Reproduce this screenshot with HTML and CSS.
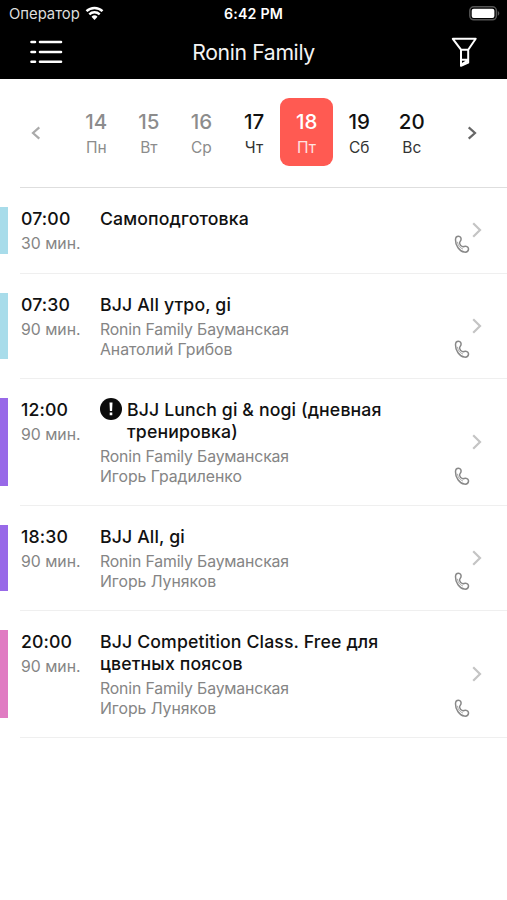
FILE: index.html
```html
<!DOCTYPE html>
<html lang="ru">
<head>
<meta charset="utf-8">
<title>Ronin Family</title>
<link rel="stylesheet" href="styles.css">
</head>
<body>
<svg class="defs" width="0" height="0" aria-hidden="true">
  <symbol id="phone" viewBox="0 0 16 19"><path d="M1.500 4.800C1.500 2.200 2.800 1.200 4.500 1.200 6.500 1.200 7.400 3.200 7 4.800 6.700 6.300 5.300 6.900 5.600 8.300c.3 1.500 1.500 2.900 2.900 3.300 1.200.3 2-.5 3.300-.3 1.600.2 2.900 1.600 2.700 3.100-.3 2-2.100 3-4.200 2.700C5.500 16.500 1.300 10.200 1.500 4.800z"/><path class="fold" d="M3.400 6.800c.3 3.200 2.300 6 5.600 7.300"/></symbol>
  <symbol id="chevron" viewBox="0 0 10 16"><path d="M1.200 1.200 8 8l-6.800 6.800"/></symbol>
</svg>
<header class="top">
  <div class="status">
    <div class="carrier">Оператор
      <svg class="wifi" width="19" height="15" viewBox="0 0 19 15"><path d="M1.500 5.200a11.500 11.500 0 0 1 16 0M4.300 8.300a7.500 7.500 0 0 1 10.400 0"/><path class="dot" d="M6.500 10.700a4.300 4.300 0 0 1 6 0l-3 3.200z"/></svg>
    </div>
    <div class="clock">6:42 PM</div>
    <svg class="battery" width="31" height="15" viewBox="0 0 31 15"><rect class="shell" x=".8" y=".8" width="26.600" height="13" rx="4"/><rect class="charge" x="2.700" y="2.700" width="22.700" height="9.200" rx="2"/><path class="tip" d="M28.800 5c2 .8 2 3.900 0 4.700z"/></svg>
  </div>
  <nav class="nav">
    <svg class="menu" width="34" height="26" viewBox="0 0 34 26"><path d="M2.500 3H6M11 3h21M2.500 13H6M11 13h21M2.500 22.700H6M11 22.700h21"/></svg>
    <h1>Ronin Family</h1>
    <svg class="filter" width="26" height="31" viewBox="0 0 26 31"><path d="M1.800 1.800h22.900L17.200 12.700v13l-7.200 3.100V12.700zM10 12.700h7.200M10 22.800h7.200M10.200 27.500l6.500-4"/></svg>
  </nav>
</header>
<section class="week">
  <svg class="prev" width="10" height="14" viewBox="0 0 10 14"><path d="M8.300 1.400 2 7l6.300 5.600"/></svg>
  <div class="days">
    <div class="day past"><b>14</b><span>Пн</span></div>
    <div class="day past"><b>15</b><span>Вт</span></div>
    <div class="day past"><b>16</b><span>Ср</span></div>
    <div class="day"><b>17</b><span>Чт</span></div>
    <div class="day selected"><b>18</b><span>Пт</span></div>
    <div class="day"><b>19</b><span>Сб</span></div>
    <div class="day"><b>20</b><span>Вс</span></div>
  </div>
  <svg class="next" width="10" height="14" viewBox="0 0 10 14"><path d="M1.700 1.400 8 7l-6.300 5.600"/></svg>
</section>
<main class="list">
  <article class="row blue">
    <div class="bar"></div>
    <div class="when"><b>07:00</b><span>30 мин.</span></div>
    <div class="info"><h2>Самоподготовка</h2></div>
    <svg class="phone"><use href="#phone"/></svg><svg class="chev"><use href="#chevron"/></svg>
  </article>
  <article class="row blue">
    <div class="bar"></div>
    <div class="when"><b>07:30</b><span>90 мин.</span></div>
    <div class="info"><h2>BJJ All утро, gi</h2><p class="place">Ronin Family Бауманская</p><p>Анатолий Грибов</p></div>
    <svg class="phone"><use href="#phone"/></svg><svg class="chev"><use href="#chevron"/></svg>
  </article>
  <article class="row violet">
    <div class="bar"></div>
    <div class="when"><b>12:00</b><span>90 мин.</span></div>
    <div class="info"><div class="alerted"><svg class="alert" width="22" height="22" viewBox="0 0 22 22"><circle cx="11" cy="11" r="11"/><path d="M9.500 4.500h3l-.4 8.500H9.900zM9.700 14.600h2.600v2.600H9.700z"/></svg><h2>BJJ Lunch gi &amp; nogi (дневная<br>тренировка)</h2></div><p class="place">Ronin Family Бауманская</p><p>Игорь Градиленко</p></div>
    <svg class="phone"><use href="#phone"/></svg><svg class="chev"><use href="#chevron"/></svg>
  </article>
  <article class="row violet">
    <div class="bar"></div>
    <div class="when"><b>18:30</b><span>90 мин.</span></div>
    <div class="info"><h2>BJJ All, gi</h2><p class="place">Ronin Family Бауманская</p><p>Игорь Луняков</p></div>
    <svg class="phone"><use href="#phone"/></svg><svg class="chev"><use href="#chevron"/></svg>
  </article>
  <article class="row pink">
    <div class="bar"></div>
    <div class="when"><b>20:00</b><span>90 мин.</span></div>
    <div class="info"><h2>BJJ Competition Class. Free для<br>цветных поясов</h2><p class="place">Ronin Family Бауманская</p><p>Игорь Луняков</p></div>
    <svg class="phone"><use href="#phone"/></svg><svg class="chev"><use href="#chevron"/></svg>
  </article>
</main>
</body>
</html>
```
FILE: styles.css
```css
* { box-sizing: border-box; margin: 0; }
body { background: #fff; color: #111; font-family: Inter, "Liberation Sans", sans-serif; }
svg { display: block; flex: none; fill: none; }
.defs { position: absolute; }

.top { height: 79px; background: #000; color: #fff; }
.status { display: grid; grid-template-columns: 1fr auto 1fr; height: 27px; align-items: center; padding: 0 7px 0 9px; font-size: 14.8px; }
.carrier { display: flex; align-items: center; gap: 5px; color: #ddd; }
.wifi { stroke: #fff; stroke-width: 2.4; }
.wifi .dot { fill: #fff; stroke: none; }
.clock { font-weight: 600; font-size: 14.2px; letter-spacing: .2px; margin-left: -2px; }
.battery { justify-self: end; }
.shell { stroke: #555; stroke-width: 1.5; }
.charge { fill: #fff; }
.tip { fill: #555; }
.nav { display: grid; grid-template-columns: 1fr auto 1fr; height: 50px; align-items: center; padding: 0 30px 0 29px; }
.nav h1 { font-size: 21.2px; font-weight: 400; letter-spacing: -.35px; color: #f4f4f4; padding-left: 1px; }
.menu { stroke: #fff; stroke-width: 2.6; stroke-linecap: round; }
.filter { justify-self: end; stroke: #fff; stroke-width: 2; stroke-linejoin: round; }

.week { display: flex; align-items: center; height: 108px; padding: 0 30px 0 31px; }
.prev, .next { stroke: #aaa; stroke-width: 2.2; }
.next { stroke: #666; }
.days { display: flex; width: 368px; margin: 0 29px 2px; }
.day { width: 52.6px; height: 68px; border-radius: 9px; padding-top: 10px; text-align: center; }
.day b { display: block; font-size: 20.5px; line-height: 27px; font-weight: 500; }
.day span { display: block; font-size: 15.5px; line-height: 25px; color: #333; }
.past b, .past span { color: #8c8c8c; }
.selected { background: #ff5a52; color: #fff; }
.selected span { color: #ffe3e0; }

.list { border-top: 1px solid #dedede; margin-left: 20px; }
.row { display: flex; margin-left: -20px; padding: 19px 25px 20px 0; background: linear-gradient(#efefef, #efefef) 20px 100% / 100% 1px no-repeat; }
.bar { width: 8px; margin-right: 13px; min-height: 46.5px; }
.blue .bar { background: #a8dcea; }
.violet .bar { background: #9869e8; }
.pink .bar { background: #e07bc2; }
.when { width: 79px; margin-bottom: -1px; padding-top: 1px; }
.when b, h2 { display: block; font-size: 17.7px; line-height: 22px; font-weight: 500; letter-spacing: .13px; }
.when span { display: block; margin-top: 4px; font-size: 15.8px; line-height: 20px; color: #858585; }
.info { flex: 1; padding-top: 1px; margin-bottom: -1px; white-space: nowrap; }
.info p { font-size: 15.8px; line-height: 20px; color: #858585; letter-spacing: -.03px; }
.info .place { margin-top: 4px; letter-spacing: -.15px; }
.alerted { display: flex; gap: 5px; }
.alert { fill: #0b0b0b; margin-top: -1px; }
.alert path { fill: #fff; }
.phone { width: 16px; height: 19px; align-self: flex-end; margin-right: 2px; stroke: #888; stroke-width: 1.5; }
.fold { stroke-width: .7; }
.chev { width: 10px; height: 16px; align-self: center; stroke: #c4c4c4; stroke-width: 2.2; }
```
